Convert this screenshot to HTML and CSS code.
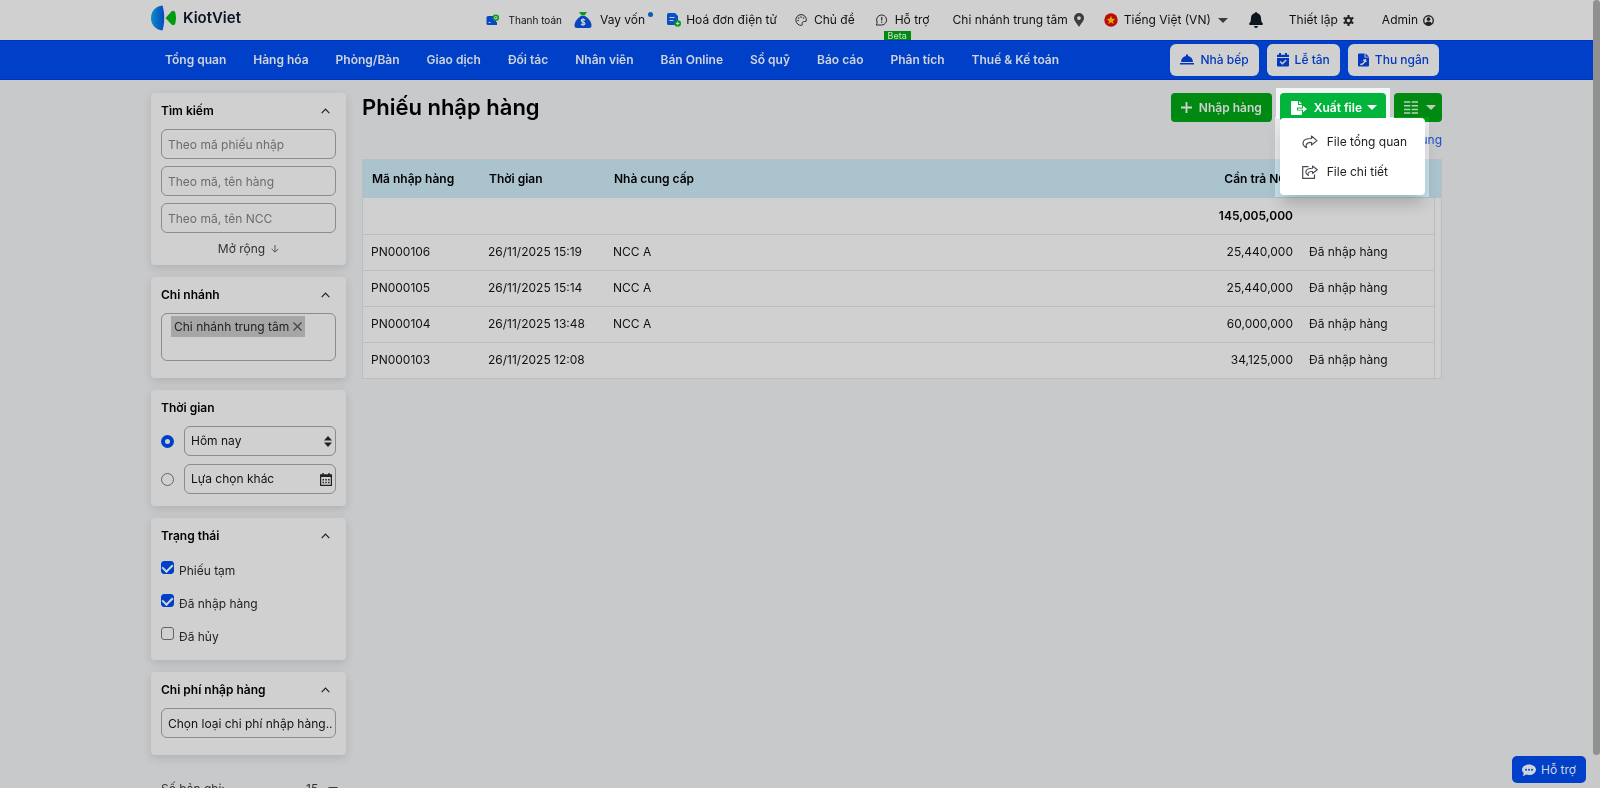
FILE: index.html
```html
<!DOCTYPE html>
<html lang="vi">
<head>
    <meta charset="UTF-8">
    <meta name="viewport" content="width=device-width, initial-scale=1.0">
    <title>Phiếu nhập hàng - KiotViet</title>
    <link rel="stylesheet" href="styles.css">
</head>
<body>
    <header class="topbar">
        <div class="container topbar-inner">
            <a class="logo" href="#">
                <svg width="26" height="26" viewBox="0 0 26 26">
                    <defs><linearGradient id="logoBlue"><stop offset="0" stop-color="#0a8fc4"/><stop offset="1" stop-color="#0648c0"/></linearGradient></defs>
                    <path d="M11.500 .5C4.500 1 0 6.500 0 13s4.500 12 11.500 12.500C13.800 18 13.800 8 11.500 .5Z" fill="url(#logoBlue)"/>
                    <path d="M14.500 13 20.500 6.500Q23 4.500 24.300 7.500 26 13 24.300 18.500 23 21.500 20.500 19.500Z" fill="#009a12"/>
                </svg>
                <span>KiotViet</span>
            </a>
            <nav class="top-links">
                <a class="top-pay" href="#">
                    <svg width="14" height="12" viewBox="0 0 14 12"><path d="M2 2h8v9H2Q.5 11 .5 9.500V3.500Q.5 2 2 2Z" fill="#0648c8"/><path d="M7 8h4v3H7z" fill="#0648c8"/><circle cx="9.800" cy="3.800" r="3.300" fill="#0a9a1a"/><circle cx="9.800" cy="3.800" r="1.300" fill="none" stroke="#d0d0d0"/><path d="M2.500 8.500h2" stroke="#d0d0d0"/></svg>
                    Thanh toán
                </a>
                <a class="top-loan" href="#">
                    <svg width="18" height="18" viewBox="0 0 18 18"><path d="M5 1h8l-2.500 3.500h-3Z" fill="#0a9a1a"/><path d="M7 5h4c5 3 6.500 7 6.500 9.500q0 2.500-2.500 2.500H3q-2.500 0-2.500-2.500C.5 12 2 8 7 5Z" fill="#0846c0"/><path d="M11 9.300C10 8 7.300 8 7.300 9.700s3.600 1 3.600 2.700-2.800 1.800-3.800.4M9 7.200v7.600" fill="none" stroke="#d0d0d0" stroke-width="1.200"/></svg>
                    <span>Vay vốn</span>
                    <i class="dot"></i>
                </a>
                <a class="top-invoice" href="#">
                    <svg width="14" height="14" viewBox="0 0 14 14"><path d="M1.500 0H8l3 3v9H1.500Q0 12 0 10.500v-9Q0 0 1.500 0Z" fill="#084fc8"/><path d="M2.500 4.500h5M2.500 7.500h4" stroke="#d0d0d0" stroke-width="1.200"/><circle cx="10.700" cy="10.500" r="3.300" fill="#0a9a1a"/><path d="M10.700 8.700v3.600M9 10.500h3.400" stroke="#c0e0c0"/></svg>
                    Hoá đơn điện tử
                </a>
                <a class="top-theme" href="#">
                    <svg width="12" height="12" viewBox="0 0 12 12"><path d="M6 .6A5.400 5.400 0 1 0 6.500 11.400C8 11.200 7 9.500 7.300 8.600 7.700 7.300 9 7.600 10 7.600q1.500 0 1.400-1.800C11.200 2.500 8.800 .6 6 .6Z" fill="none" stroke="#26282c"/><g fill="#26282c"><circle cx="3.100" cy="6.500" r=".8"/><circle cx="3.700" cy="4" r=".8"/><circle cx="6" cy="3" r=".8"/><circle cx="8.500" cy="4" r=".8"/></g></svg>
                    Chủ đề
                </a>
                <a class="top-help" href="#">
                    <svg width="13" height="12" viewBox="0 0 13 12"><path d="M1.300 11H6.800a5 5 0 1 0-4.800-3q.2 1.800-.7 3Z" fill="none" stroke="#26282c"/><path d="M6.700 3v3.500M6.700 7.600v1.200" stroke="#26282c" stroke-width="1.200"/></svg>
                    <span>Hỗ trợ</span>
                    <span class="beta">Beta</span>
                </a>
                <a class="top-branch" href="#">
                    Chi nhánh trung tâm
                    <svg width="10" height="14" viewBox="0 0 10 14"><path fill-rule="evenodd" d="M5 0a5 5 0 0 1 5 5c0 2.500-2.500 5-5 9C2.500 10 0 7.500 0 5a5 5 0 0 1 5-5Zm0 3.200a1.900 1.900 0 1 0 0 3.800 1.900 1.900 0 0 0 0-3.800Z" fill="#3c3c3c"/></svg>
                </a>
                <button class="top-lang" type="button">
                    <svg width="14" height="14" viewBox="0 0 14 14"><circle cx="7" cy="7" r="6.700" fill="#bd0a0a"/><path d="m7 2.800 1.200 2.900 3 .2-2.300 2 .8 3L7 9.200l-2.700 1.700.8-3-2.300-2 3-.2Z" fill="#d6b500"/></svg>
                    Tiếng Việt (VN)
                    <i class="caret dark"></i>
                </button>
                <button class="top-bell" type="button" aria-label="Thông báo">
                    <svg width="14" height="16" viewBox="0 0 14 16"><path d="M7 0q1 0 1 1c2.500.5 4 2.500 4 5 0 3.500 1 4.500 1.800 5.500.4.600.1 1.500-.8 1.500H1c-.9 0-1.200-.9-.8-1.500C1 10.500 2 9.500 2 6c0-2.500 1.500-4.500 4-5q0-1 1-1ZM5 14h4q-.3 2-2 2t-2-2Z" fill="#0d151f"/></svg>
                </button>
                <button class="top-settings" type="button">
                    Thiết lập
                    <svg width="11" height="11" viewBox="0 0 12 12"><g fill="none" stroke="#222428"><circle cx="6" cy="6" r="3" stroke-width="2.200"/><path d="M6 0v2.500M6 9.500V12M.8 3l2.200 1.200M9 7.800 11.200 9M.8 9 3 7.800M9 4.200 11.200 3" stroke-width="2.400"/></g></svg>
                </button>
                <button class="top-user" type="button">
                    Admin
                    <svg width="11" height="11" viewBox="0 0 12 12"><circle cx="6" cy="6" r="5.200" fill="none" stroke="#202226" stroke-width="1.500"/><circle cx="6" cy="4.500" r="2" fill="#202226"/><path d="M2 9.500q1.200-2.300 4-2.300t4 2.300Q8.500 11.500 6 11.500T2 9.500Z" fill="#202226"/></svg>
                </button>
            </nav>
        </div>
    </header>

    <div class="mainbar">
        <div class="container mainbar-inner">
            <nav class="menu">
                <a href="#">Tổng quan</a>
                <a href="#">Hàng hóa</a>
                <a href="#">Phòng/Bàn</a>
                <a href="#">Giao dịch</a>
                <a href="#">Đối tác</a>
                <a href="#">Nhân viên</a>
                <a href="#">Bán Online</a>
                <a href="#">Sổ quỹ</a>
                <a href="#">Báo cáo</a>
                <a href="#">Phân tích</a>
                <a href="#">Thuế &amp; Kế toán</a>
            </nav>
            <div class="shortcuts">
                <a href="#">
                    <svg width="14" height="12" viewBox="0 0 14 12"><path d="M6 .5h2v1.600C11 2.500 12.800 5 13 8H1c.2-3 2-5.500 5-5.900ZM0 9h14v1.600H0Z" fill="#0238bd"/></svg>
                    Nhà bếp
                </a>
                <a href="#">
                    <svg width="12" height="14" viewBox="0 0 12 14"><path fill-rule="evenodd" d="M2 0h2v1.800h4V0h2v1.800h2V4H0V1.800h2ZM0 5h12v7.500q0 1-1 1H1q-1 0-1-1Zm2.600 4 2.800 2.800 4.300-4.300-1-1L5.400 9.800 3.600 8Z" fill="#0238bd"/></svg>
                    Lễ tân
                </a>
                <a href="#">
                    <svg width="11" height="14" viewBox="0 0 11 14"><path d="M1 .5h5.500V4.500H11V12.500q0 1-1 1H1q-1 0-1-1v-11Q0 .5 1 .5ZM7.500 .5 11 3.700H7.500Z" fill="#0238bd"/><path d="M2.300 11.500q3.500 0 5-4.500M5 7.500l2.500-.8.500 2.500" fill="none" stroke="#d0d0d0" stroke-width="1.300"/></svg>
                    Thu ngân
                </a>
            </div>
        </div>
    </div>

    <div class="container page">
        <aside class="sidebar">
            <section class="card">
                <div class="card-title">
                    <h2>Tìm kiếm</h2>
                    <button type="button" aria-label="Thu gọn"><svg width="9" height="6" viewBox="0 0 9 6"><path d="m.7 5.200 3.800-4 3.800 4" fill="none" stroke="#222" stroke-width="1.200"/></svg></button>
                </div>
                <div class="fields">
                    <input type="text" placeholder="Theo mã phiếu nhập" aria-label="Theo mã phiếu nhập">
                    <input type="text" placeholder="Theo mã, tên hàng" aria-label="Theo mã, tên hàng">
                    <input type="text" placeholder="Theo mã, tên NCC" aria-label="Theo mã, tên NCC">
                </div>
                <button class="expand" type="button">
                    Mở rộng
                    <svg width="8" height="8" viewBox="0 0 8 8"><path d="M4 0v7M.7 3.900 4 7.200l3.300-3.300" fill="none" stroke="#555"/></svg>
                </button>
            </section>

            <section class="card card-branch">
                <div class="card-title">
                    <h2>Chi nhánh</h2>
                    <button type="button" aria-label="Thu gọn"><svg width="9" height="6" viewBox="0 0 9 6"><path d="m.7 5.200 3.800-4 3.800 4" fill="none" stroke="#222" stroke-width="1.200"/></svg></button>
                </div>
                <div class="tag-box">
                    <span class="tag">Chi nhánh trung tâm
                        <button type="button" aria-label="Xóa chi nhánh"><svg width="9" height="9" viewBox="0 0 9 9"><path d="m.5 .5 8 8M8.500 .5l-8 8" stroke="#444" stroke-width="1.200"/></svg></button>
                    </span>
                </div>
            </section>

            <section class="card card-time">
                <div class="card-title"><h2>Thời gian</h2></div>
                <div class="time-row">
                    <input type="radio" name="time" id="timeToday" aria-label="Hôm nay" checked>
                    <div class="picker">
                        <select aria-label="Thời gian"><option>Hôm nay</option></select>
                        <svg width="8" height="11" viewBox="0 0 8 11"><path d="M0 4.500 4 0l4 4.500ZM0 6.500h8L4 11Z" fill="#222"/></svg>
                    </div>
                </div>
                <div class="time-row">
                    <input type="radio" name="time" id="timeOther" aria-label="Lựa chọn khác">
                    <button class="picker" type="button">
                        <span>Lựa chọn khác</span>
                        <svg width="12" height="13" viewBox="0 0 12 13"><path d="M.6 2h10.800v10.400H.6Z" fill="none" stroke="#222" stroke-width="1.200"/><path d="M0 1.500h12V4H0ZM2.300 0h1.400v2H2.300ZM8.300 0h1.400v2H8.300Z" fill="#222"/><path d="M2.500 6.700h7.500M2.500 9.500h7.500" stroke="#222" stroke-width="1.500" stroke-dasharray="1.500 1.300"/></svg>
                    </button>
                </div>
            </section>

            <section class="card card-status">
                <div class="card-title">
                    <h2>Trạng thái</h2>
                    <button type="button" aria-label="Thu gọn"><svg width="9" height="6" viewBox="0 0 9 6"><path d="m.7 5.200 3.800-4 3.800 4" fill="none" stroke="#222" stroke-width="1.200"/></svg></button>
                </div>
                <label class="check"><input type="checkbox" checked><span>Phiếu tạm</span></label>
                <label class="check"><input type="checkbox" checked><span>Đã nhập hàng</span></label>
                <label class="check"><input type="checkbox"><span>Đã hủy</span></label>
            </section>

            <section class="card card-cost">
                <div class="card-title">
                    <h2>Chi phí nhập hàng</h2>
                    <button type="button" aria-label="Thu gọn"><svg width="9" height="6" viewBox="0 0 9 6"><path d="m.7 5.200 3.800-4 3.800 4" fill="none" stroke="#222" stroke-width="1.200"/></svg></button>
                </div>
                <input class="cost" type="text" value="Chọn loại chi phí nhập hàng.." aria-label="Chi phí nhập hàng">
            </section>

            <div class="records">
                <label for="pageSize">Số bản ghi:</label>
                <div class="page-size">
                    <select id="pageSize"><option>15</option></select>
                    <i class="caret dark"></i>
                </div>
            </div>
        </aside>

        <main class="content">
            <div class="content-head">
                <h1>Phiếu nhập hàng</h1>
                <div class="actions">
                    <button class="btn btn-add" type="button">
                        <svg width="11" height="11" viewBox="0 0 11 11"><path d="M5.500 0v11M0 5.500h11" stroke="#d0d0d0" stroke-width="1.800"/></svg>
                        Nhập hàng
                    </button>
                    <div class="export">
                        <button class="btn btn-export" type="button">
                            <svg width="16" height="14" viewBox="0 0 16 14"><path d="M1 0h6v4h4v2.500H6v3h5V13q0 1-1 1H1q-1 0-1-1V1q0-1 1-1ZM8 0l3 3H8Z" fill="#fff"/><path d="M7 7.400h5V4.800L16 8l-4 3.200V8.700H7Z" fill="#fff"/></svg>
                            Xuất file
                            <i class="caret"></i>
                        </button>
                        <div class="export-menu">
                            <a href="#">
                                <svg width="16" height="14" viewBox="0 0 16 14"><path d="M9.500 1 15 5.600 9.500 10V7.500C6.500 7.300 5 8.200 4.300 9.700Q3.800 11 4.600 12.700C2.300 11.700 1 10.300 1 8.300 1 5 4.500 3.500 9.500 3.500Z" fill="none" stroke="#444b55" stroke-width="1.200" stroke-linejoin="round"/></svg>
                                File tổng quan
                            </a>
                            <a href="#">
                                <svg width="16" height="14" viewBox="0 0 16 14"><path d="M10.500 1 15.300 4.700 10.500 8.500V6.500C8 6.300 6.800 7 6.200 8q-.5 1 .2 2.500C4.500 9.500 3.800 8.700 3.800 7.200 3.800 4.300 6.500 3.200 10.500 3.200Z" fill="none" stroke="#444b55" stroke-width="1.100" stroke-linejoin="round"/><path d="M6.500 1.600H.7v11.700h11.800V9.500" fill="none" stroke="#444b55" stroke-width="1.200"/></svg>
                                File chi tiết
                            </a>
                        </div>
                    </div>
                    <button class="btn btn-columns" type="button" aria-label="Cột hiển thị">
                        <svg width="14" height="13" viewBox="0 0 14 13"><path d="M0 1h6.300M7.700 1H14M0 4.700h6.300M7.700 4.700H14M0 8.400h6.300M7.700 8.400H14M0 12h6.300M7.700 12H14" stroke="#b8d0b8" stroke-width="1.500"/></svg>
                        <i class="caret dim"></i>
                    </button>
                </div>
            </div>
            <div class="guide"><a href="#">Hướng dẫn sử dụng</a></div>

            <div class="grid">
                <table>
                    <thead>
                        <tr>
                            <th class="col-code">Mã nhập hàng</th>
                            <th class="col-time">Thời gian</th>
                            <th>Nhà cung cấp</th>
                            <th class="col-money">Cần trả NCC</th>
                            <th class="col-status">Trạng thái</th>
                            <th class="col-scroll"></th>
                        </tr>
                    </thead>
                    <tbody>
                        <tr class="total">
                            <td></td><td></td><td></td>
                            <td class="col-money">145,005,000</td>
                            <td></td><td class="col-scroll"></td>
                        </tr>
                        <tr>
                            <td>PN000106</td><td>26/11/2025 15:19</td><td>NCC A</td>
                            <td class="col-money">25,440,000</td>
                            <td>Đã nhập hàng</td><td class="col-scroll"></td>
                        </tr>
                        <tr>
                            <td>PN000105</td><td>26/11/2025 15:14</td><td>NCC A</td>
                            <td class="col-money">25,440,000</td>
                            <td>Đã nhập hàng</td><td class="col-scroll"></td>
                        </tr>
                        <tr>
                            <td>PN000104</td><td>26/11/2025 13:48</td><td>NCC A</td>
                            <td class="col-money">60,000,000</td>
                            <td>Đã nhập hàng</td><td class="col-scroll"></td>
                        </tr>
                        <tr>
                            <td>PN000103</td><td>26/11/2025 12:08</td><td></td>
                            <td class="col-money">34,125,000</td>
                            <td>Đã nhập hàng</td><td class="col-scroll"></td>
                        </tr>
                    </tbody>
                </table>
            </div>
        </main>
    </div>

    <button class="support" type="button">
        <svg width="14" height="12" viewBox="0 0 14 12"><path d="M7 .5c3.900 0 7 2.300 7 5.200S10.900 11 7 11q-1.500 0-2.800-.4Q2.500 12 .5 12q1.300-1.500 1.200-3Q0 7.700 0 5.700C0 2.800 3.100 .5 7 .5Z" fill="#d0d4dc"/><g fill="#0040c8"><circle cx="4" cy="5.800" r="1"/><circle cx="7" cy="5.800" r="1"/><circle cx="10" cy="5.800" r="1"/></g></svg>
        Hỗ trợ
    </button>
    <div class="scroll-thumb"></div>
</body>
</html>
```
FILE: styles.css
```css
* {
    box-sizing: border-box;
}
body {
    margin: 0;
    padding-right: 7px;
    height: 100vh;
    overflow: hidden;
    background: #c8c9cb;
    color: #111;
    font: 12px/20px Inter, "Noto Sans", sans-serif;
}
a {
    color: inherit;
    text-decoration: none;
}
button, input, select {
    font: inherit;
    color: inherit;
}
button {
    border: none;
    background: none;
    padding: 0;
    cursor: pointer;
}
svg {
    flex: none;
}
h1, h2 {
    margin: 0;
}
.container {
    max-width: 1291px;
    margin: 0 auto;
}
.caret {
    border: 5px solid transparent;
    border-top-color: #fff;
    border-bottom: 0;
}
.caret.dark {
    border-top-color: #3c3c3c;
}
.caret.dim {
    border-top-color: #b8d0b8;
}

/* top bar */
.topbar {
    background: #d0d0d0;
    margin-right: -7px;
    padding-right: 7px;
}
.topbar-inner {
    display: flex;
    justify-content: space-between;
    height: 40px;
    padding-right: 8px;
}
.logo {
    display: flex;
    align-items: center;
    gap: 6px;
    height: 36px;
    font-size: 15px;
    font-weight: 600;
    color: #0c1524;
}
.top-links {
    display: flex;
    align-items: center;
}
.top-links a, .top-links button {
    display: flex;
    align-items: center;
    position: relative;
    gap: 7px;
}
.top-links .top-pay {
    font-size: 10px;
    gap: 9px;
    margin-right: 12px;
}
.top-links .top-loan {
    gap: 8px;
    margin-right: 22px;
}
.dot {
    position: absolute;
    right: -8px;
    top: 2px;
    width: 5px;
    height: 5px;
    border-radius: 50%;
    background: #0a5cb8;
}
.top-links .top-invoice {
    gap: 5px;
    margin-right: 18px;
}
.top-theme {
    margin-right: 20px;
}
.top-help {
    margin-right: 23px;
}
.beta {
    position: absolute;
    left: 9px;
    top: 21px;
    width: 27px;
    height: 9px;
    background: #008a12;
    color: #d0e4d0;
    font-size: 9px;
    line-height: 9px;
    text-align: center;
}
.top-links .top-branch {
    gap: 6px;
    margin-right: 20px;
}
.top-links .top-lang {
    gap: 6px;
}
.top-lang .caret {
    margin-left: 1px;
}
.top-bell {
    margin: 0 26px 0 21px;
}
.top-links .top-settings, .top-links .top-user {
    gap: 5px;
}
.top-links .top-settings {
    margin-right: 28px;
}

/* main menu */
.mainbar {
    margin-right: -7px;
    padding-right: 7px;
    background: #0040c8;
    border-top: 1px solid #0432b4;
    border-bottom: 1px solid #0432b4;
}
.mainbar-inner {
    display: flex;
    justify-content: space-between;
    align-items: center;
    height: 38px;
    padding-right: 3px;
}
.menu {
    display: flex;
    gap: 27px;
    padding-left: 14px;
    color: #d0d4dc;
    font-weight: 600;
}
.shortcuts {
    display: flex;
    gap: 8px;
}
.shortcuts a {
    display: flex;
    align-items: center;
    gap: 6px;
    height: 32px;
    padding: 0 10px;
    border-radius: 6px;
    background: #d0d0d0;
    color: #0238bd;
    font-weight: 500;
}

.page {
    display: flex;
    gap: 16px;
    padding-top: 13px;
}

/* filters */
.sidebar {
    flex: none;
    width: 195px;
}
.card {
    margin-bottom: 12px;
    padding: 0 10px;
    border-radius: 4px;
    background: #d0d0d0;
    box-shadow: 0 3px 10px rgba(0, 0, 0, .12);
}
.card-title {
    display: flex;
    align-items: center;
    justify-content: space-between;
    height: 36px;
    padding-right: 6px;
}
.card-title h2 {
    font-size: 12px;
    font-weight: 600;
    color: #000;
}
.card-title button {
    display: flex;
}
.fields {
    display: grid;
    gap: 7px;
}
.fields input, .cost {
    width: 100%;
    height: 30px;
    padding: 0 0 0 6px;
    border: 1px solid #8c8c8e;
    border-radius: 6px;
    background: none;
}
.fields input::placeholder {
    color: #6c6c70;
}
.expand {
    display: flex;
    align-items: center;
    justify-content: center;
    gap: 6px;
    width: 100%;
    height: 32px;
    color: #333;
}
.card-branch {
    padding-bottom: 17px;
}
.tag-box {
    height: 48px;
    padding: 2px 9px;
    border: 1px solid #8c8c8e;
    border-radius: 6px;
}
.tag {
    display: inline-flex;
    align-items: center;
    gap: 4px;
    height: 21px;
    padding: 0 3px;
    background: #a6a6a6;
    color: #222;
    white-space: nowrap;
}
.tag button {
    display: flex;
}
.card-time {
    padding-bottom: 12px;
}
.time-row {
    display: flex;
    align-items: center;
    gap: 10px;
}
.time-row + .time-row {
    margin-top: 8px;
}
input[type="radio"] {
    appearance: none;
    flex: none;
    width: 13px;
    height: 13px;
    margin: 0;
    border: 1px solid #666;
    border-radius: 50%;
}
input[type="radio"]:checked {
    border: 4px solid #0040c8;
}
.picker {
    display: flex;
    align-items: center;
    justify-content: space-between;
    flex: 1;
    height: 30px;
    padding: 0 3px 0 6px;
    border: 1px solid #8c8c8e;
    border-radius: 6px;
}
.picker select {
    appearance: none;
    flex: 1;
    padding: 0;
    border: none;
    background: none;
}
.card-status {
    padding-bottom: 7px;
}
.check {
    display: flex;
    align-items: flex-start;
    gap: 5px;
    height: 33px;
    padding-top: 7px;
    color: #222;
}
input[type="checkbox"] {
    appearance: none;
    display: flex;
    justify-content: center;
    flex: none;
    width: 13px;
    height: 13px;
    margin: 0;
    border: 1px solid #606468;
    border-radius: 3px;
}
input[type="checkbox"]:checked {
    border-color: #0040c8;
    background: #0040c8;
}
input[type="checkbox"]:checked::after {
    content: "";
    width: 5px;
    height: 8px;
    border: solid #d0d4dc;
    border-width: 0 2px 2px 0;
    transform: rotate(45deg);
}
.card-cost {
    padding-bottom: 17px;
}
.cost {
    display: block;
}
.records {
    display: flex;
    justify-content: space-between;
    padding: 12px 8px 0 10px;
    color: #333;
}
.page-size {
    display: flex;
    align-items: center;
    gap: 9px;
}
.page-size select {
    appearance: none;
    padding: 0;
    border: none;
    background: none;
}

/* content */
.content {
    flex: 1;
    min-width: 0;
}
.content-head {
    display: flex;
    justify-content: space-between;
}
h1 {
    color: #000;
    font-size: 22px;
    font-weight: 600;
    line-height: 28px;
}
.actions {
    display: flex;
    gap: 8px;
}
.btn {
    display: flex;
    align-items: center;
    height: 29px;
    border-radius: 4px;
    background: #008a12;
    color: #d0d0d0;
    font-weight: 600;
}
.btn-add {
    gap: 7px;
    padding: 0 10px;
}
.export {
    position: relative;
}
/* lit area behind the open export button and its menu */
.export::before {
    content: "";
    position: absolute;
    inset: -5px -4px 4px;
    background: #f4f5f7;
}
.export::after {
    content: "";
    position: absolute;
    left: -5px;
    top: 24px;
    width: 154px;
    height: 80px;
    background: #242424;
    mix-blend-mode: color-dodge;
}
.btn-export {
    position: relative;
    z-index: 2;
    gap: 7px;
    padding: 0 9px 0 11px;
    background: #00b43c;
    color: #fff;
}
.btn-export .caret {
    margin-left: -2px;
}
.export-menu {
    position: absolute;
    z-index: 3;
    left: 0;
    top: 25px;
    width: 145px;
    padding: 9px 0 8px;
    border-radius: 4px;
    background: #fff;
    box-shadow: 0 10px 16px -2px rgba(0, 0, 0, .2);
}
.export-menu a {
    display: flex;
    align-items: center;
    gap: 9px;
    height: 30px;
    padding-left: 22px;
    color: #222;
}
.btn-columns {
    gap: 8px;
    padding: 0 6px 0 10px;
}
.guide {
    padding: 8px 0 9px;
    text-align: right;
    color: #1650c8;
}
.grid {
    border: 1px solid #bcbdc0;
    background: #d0d0d0;
}
table {
    width: 100%;
    border-collapse: collapse;
    table-layout: fixed;
}
th, td {
    height: 36px;
    padding: 0 8px;
    text-align: left;
    white-space: nowrap;
}
th {
    height: 38px;
    padding-left: 9px;
    background: #abc3cc;
    color: #000;
    font-weight: 600;
}
tr + tr td {
    border-top: 1px solid #bcbdc0;
}
tr td.col-scroll {
    border-top: none;
    border-left: 1px solid #bcbdc0;
}
.total td {
    color: #000;
    font-weight: 600;
}
.col-code {
    width: 117px;
}
.col-time {
    width: 125px;
}
th.col-money {
    width: 160px;
}
.col-money {
    text-align: right;
}
th.col-money {
    padding-right: 5px;
}
.col-status {
    width: 133px;
}
.col-scroll {
    width: 7px;
    padding: 0;
}

.support {
    position: fixed;
    right: 14px;
    bottom: 5px;
    display: flex;
    align-items: center;
    gap: 5px;
    height: 27px;
    padding: 0 10px;
    border-radius: 5px;
    background: #0040c8;
    color: #d0d4dc;
}
.scroll-thumb {
    position: fixed;
    right: 0;
    top: 0;
    width: 7px;
    height: 755px;
    border-radius: 4px;
    background: #909090;
}
```
